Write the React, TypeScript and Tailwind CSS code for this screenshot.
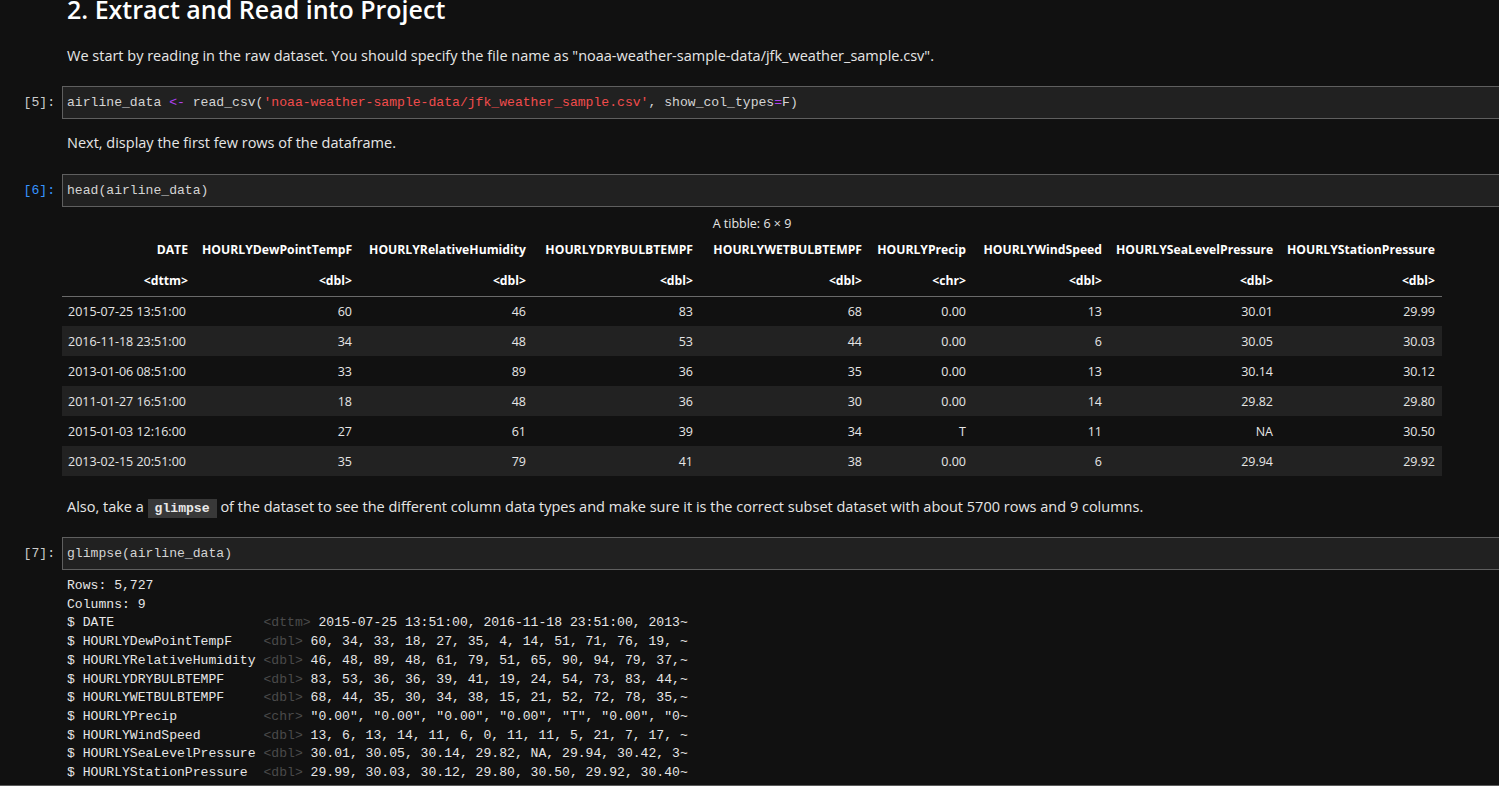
import React from "react";

const sans = "font-['Segoe_UI','Open_Sans','Noto_Sans',sans-serif]";
const mono = "font-['Liberation_Mono','DejaVu_Sans_Mono',monospace]";

function Prompt({ n, active }: { n: number; active?: boolean }) {
  return (
    <div
      className={`w-[62px] shrink-0 pr-[7px] text-right text-[13.1px] leading-[19px] pt-[7px] ${mono} ${
        active ? "text-[#3794ff]" : "text-[#cccccc]"
      }`}
    >
      [{n}]:
    </div>
  );
}

function CodeBox({ children }: { children: React.ReactNode }) {
  return (
    <div
      className={`flex-1 h-[33px] border-y border-l border-[#5f5f5f] bg-[#212121] pl-[4px] pt-[6px] text-[13.1px] leading-[19px] text-[#d4d4d4] whitespace-pre ${mono}`}
    >
      {children}
    </div>
  );
}

const headers = [
  "DATE",
  "HOURLYDewPointTempF",
  "HOURLYRelativeHumidity",
  "HOURLYDRYBULBTEMPF",
  "HOURLYWETBULBTEMPF",
  "HOURLYPrecip",
  "HOURLYWindSpeed",
  "HOURLYSeaLevelPressure",
  "HOURLYStationPressure",
];
const types = ["<dttm>", "<dbl>", "<dbl>", "<dbl>", "<dbl>", "<chr>", "<dbl>", "<dbl>", "<dbl>"];
const rows = [
  ["2015-07-25 13:51:00", "60", "46", "83", "68", "0.00", "13", "30.01", "29.99"],
  ["2016-11-18 23:51:00", "34", "48", "53", "44", "0.00", "6", "30.05", "30.03"],
  ["2013-01-06 08:51:00", "33", "89", "36", "35", "0.00", "13", "30.14", "30.12"],
  ["2011-01-27 16:51:00", "18", "48", "36", "30", "0.00", "14", "29.82", "29.80"],
  ["2015-01-03 12:16:00", "27", "61", "39", "34", "T", "11", "NA", "30.50"],
  ["2013-02-15 20:51:00", "35", "79", "41", "38", "0.00", "6", "29.94", "29.92"],
];

const glimpse: [string, string, string][] = [
  ["$ DATE                  ", "<dttm>", " 2015-07-25 13:51:00, 2016-11-18 23:51:00, 2013~"],
  ["$ HOURLYDewPointTempF   ", "<dbl>", " 60, 34, 33, 18, 27, 35, 4, 14, 51, 71, 76, 19, ~"],
  ["$ HOURLYRelativeHumidity", "<dbl>", " 46, 48, 89, 48, 61, 79, 51, 65, 90, 94, 79, 37,~"],
  ["$ HOURLYDRYBULBTEMPF    ", "<dbl>", " 83, 53, 36, 36, 39, 41, 19, 24, 54, 73, 83, 44,~"],
  ["$ HOURLYWETBULBTEMPF    ", "<dbl>", " 68, 44, 35, 30, 34, 38, 15, 21, 52, 72, 78, 35,~"],
  ["$ HOURLYPrecip          ", "<chr>", ' "0.00", "0.00", "0.00", "0.00", "T", "0.00", "0~'],
  ["$ HOURLYWindSpeed       ", "<dbl>", " 13, 6, 13, 14, 11, 6, 0, 11, 11, 5, 21, 7, 17, ~"],
  ["$ HOURLYSeaLevelPressure", "<dbl>", " 30.01, 30.05, 30.14, 29.82, NA, 29.94, 30.42, 3~"],
  ["$ HOURLYStationPressure ", "<dbl>", " 29.99, 30.03, 30.12, 29.80, 30.50, 29.92, 30.40~"],
];

export default function App() {
  return (
    <div className={`w-[1499px] h-[786px] overflow-hidden bg-[#111111] text-[#e6e6e6] ${sans}`}>
      <div className="flex flex-col">
        <h2 className="-mt-[9px] h-[36px] pl-[67px] text-[25px] leading-[36px] font-semibold text-white">
          2. Extract and Read into Project
        </h2>
        <p className="mt-[19px] pl-[67px] text-[14.5px] leading-[20px]">
          We start by reading in the raw dataset. You should specify the file name as
          "noaa-weather-sample-data/jfk_weather_sample.csv".
        </p>

        <div className="mt-[20px] flex">
          <Prompt n={5} />
          <CodeBox>
            airline_data <span className="text-[#b040f0]">&lt;-</span> read_csv(
            <span className="text-[#f14c4c]">'noaa-weather-sample-data/jfk_weather_sample.csv'</span>, show_col_types
            <span className="text-[#b040f0]">=</span>F)
          </CodeBox>
        </div>

        <p className="mt-[14px] pl-[67px] text-[14.5px] leading-[20px]">Next, display the first few rows of the dataframe.</p>

        <div className="mt-[21px] flex">
          <Prompt n={6} active />
          <CodeBox>head(airline_data)</CodeBox>
        </div>

        <div className="mt-[5px] pl-[62px]">
          <table className="table-fixed border-collapse w-[1380px] text-[12.5px] text-[#e6e6e6]">
            <caption className="h-[24px] leading-[24px] text-center text-[12.5px]">A tibble: 6 × 9</caption>
            <colgroup>
              <col className="w-[133px]" />
              <col className="w-[164px]" />
              <col className="w-[174px]" />
              <col className="w-[167px]" />
              <col className="w-[169px]" />
              <col className="w-[104px]" />
              <col className="w-[136px]" />
              <col className="w-[171px]" />
              <col className="w-[162px]" />
            </colgroup>
            <thead>
              <tr className="h-[28px]">
                {headers.map((h) => (
                  <th key={h} className="px-[7px] text-right text-[12.2px] font-bold whitespace-nowrap text-white">
                    {h}
                  </th>
                ))}
              </tr>
              <tr className="h-[32px]">
                {types.map((t, i) => (
                  <th key={i} className="px-[7px] pt-[2px] text-right text-[12.2px] font-bold text-white border-b border-[#6a6a6a]">
                    {t}
                  </th>
                ))}
              </tr>
            </thead>
            <tbody>
              {rows.map((r, ri) => (
                <tr key={ri} className={`h-[30px] ${ri % 2 === 1 ? "bg-[#222222]" : ""}`}>
                  {r.map((c, ci) => (
                    <td key={ci} className={`px-[7px] pt-[2px] whitespace-nowrap ${ci === 0 ? "text-left pl-[6px]" : "text-right"}`}>
                      {c}
                    </td>
                  ))}
                </tr>
              ))}
            </tbody>
          </table>
        </div>

        <p className="mt-[21px] pl-[67px] text-[14.5px] leading-[20px]">
          Also, take a{" "}
          <code className={`bg-[#383838] px-[7px] py-[2px] text-[13.1px] text-[#e8e8e8] font-bold ${mono}`}>glimpse</code>{" "}
          of the dataset to see the different column data types and make sure it is the correct subset dataset with about
          5700 rows and 9 columns.
        </p>

        <div className="mt-[18px] flex">
          <Prompt n={7} />
          <CodeBox>glimpse(airline_data)</CodeBox>
        </div>

        <div className={`mt-[7px] pl-[67px] text-[13.1px] leading-[18.7px] text-[#e6e6e6] whitespace-pre ${mono}`}>
          <div>Rows: 5,727</div>
          <div>Columns: 9</div>
          {glimpse.map(([a, b, c], i) => (
            <div key={i}>
              {a} <span className="text-[#4a4a4a]">{b}</span>
              {c}
            </div>
          ))}
        </div>
        <div className="mt-[2px] h-[2px] bg-[#5a5a5a]" />
      </div>
    </div>
  );
}
